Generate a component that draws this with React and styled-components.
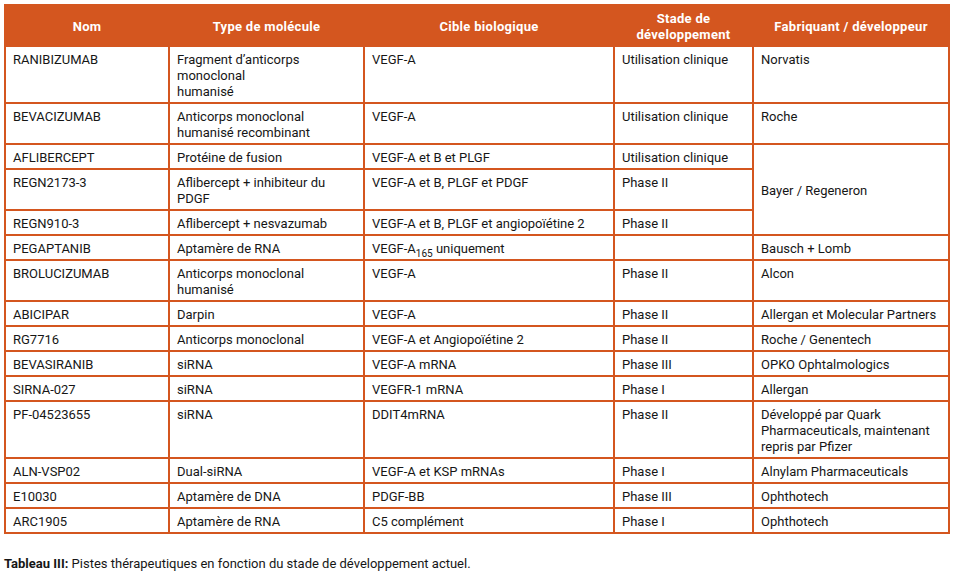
import styled, { createGlobalStyle } from "styled-components";

const ORANGE = "#d4561f";

const GlobalStyle = createGlobalStyle`
  body {
    margin: 0;
    background: #fff;
    font-family: "Roboto", "Liberation Sans", Arial, sans-serif;
    color: #161616;
  }
`;

const Page = styled.div`
  padding: 4px 5px 0 4px;
`;

const Table = styled.table`
  width: 944px;
  border-collapse: collapse;
  table-layout: fixed;
  font-size: 13px;
  line-height: 16px;
`;

const Th = styled.th`
  background: ${ORANGE};
  color: #fff;
  font-weight: 700;
  letter-spacing: 0.3px;
  text-align: center;
  padding: 5px 6px 2px;
  border: 2px solid ${ORANGE};
  vertical-align: middle;
`;

const Td = styled.td`
  border: 2px solid ${ORANGE};
  padding: 5px 7px 2px;
  vertical-align: ${(p) => (p.$middle ? "middle" : "top")};
`;

const Sub = styled.sub`
  font-size: 10px;
  line-height: 0;
  vertical-align: -4px;
`;

const Caption = styled.p`
  margin: 22px 0 0;
  font-size: 13px;
  line-height: 16px;
  b {
    font-weight: 700;
  }
`;

const rows = [
  ["RANIBIZUMAB", <>Fragment d’anticorps<br />monoclonal<br />humanisé</>, "VEGF-A", "Utilisation clinique", "Norvatis"],
  ["BEVACIZUMAB", <>Anticorps monoclonal<br />humanisé recombinant</>, "VEGF-A", "Utilisation clinique", "Roche"],
  ["AFLIBERCEPT", "Protéine de fusion", "VEGF-A et B et PLGF", "Utilisation clinique", { text: "Bayer / Regeneron", span: 3 }],
  ["REGN2173-3", <>Aflibercept + inhibiteur du<br />PDGF</>, "VEGF-A et B, PLGF et PDGF", "Phase II", null],
  ["REGN910-3", "Aflibercept + nesvazumab", "VEGF-A et B, PLGF et angiopoïétine 2", "Phase II", null],
  ["PEGAPTANIB", "Aptamère de RNA", <>VEGF-A<Sub>165</Sub> uniquement</>, "", "Bausch + Lomb"],
  ["BROLUCIZUMAB", <>Anticorps monoclonal<br />humanisé</>, "VEGF-A", "Phase II", "Alcon"],
  ["ABICIPAR", "Darpin", "VEGF-A", "Phase II", "Allergan et Molecular Partners"],
  ["RG7716", "Anticorps monoclonal", "VEGF-A et Angiopoïétine 2", "Phase II", "Roche / Genentech"],
  ["BEVASIRANIB", "siRNA", "VEGF-A mRNA", "Phase III", "OPKO Ophtalmologics"],
  ["SIRNA-027", "siRNA", "VEGFR-1 mRNA", "Phase I", "Allergan"],
  ["PF-04523655", "siRNA", "DDIT4mRNA", "Phase II", <>Développé par Quark<br />Pharmaceuticals, maintenant<br />repris par Pfizer</>],
  ["ALN-VSP02", "Dual-siRNA", "VEGF-A et KSP mRNAs", "Phase I", "Alnylam Pharmaceuticals"],
  ["E10030", "Aptamère de DNA", "PDGF-BB", "Phase III", "Ophthotech"],
  ["ARC1905", "Aptamère de RNA", "C5 complément", "Phase I", "Ophthotech"],
];

function Row({ cells }) {
  return (
    <tr>
      {cells.map((c, i) => {
        if (c === null) return null;
        if (c && typeof c === "object" && c.span) {
          return (
            <Td key={i} rowSpan={c.span} $middle>
              {c.text}
            </Td>
          );
        }
        return <Td key={i}>{c}</Td>;
      })}
    </tr>
  );
}

export default function App() {
  return (
    <Page>
      <GlobalStyle />
      <Table>
        <colgroup>
          <col style={{ width: 164 }} />
          <col style={{ width: 195 }} />
          <col style={{ width: 250 }} />
          <col style={{ width: 139 }} />
          <col style={{ width: 196 }} />
        </colgroup>
        <thead>
          <tr>
            <Th>Nom</Th>
            <Th>Type de molécule</Th>
            <Th>Cible biologique</Th>
            <Th>Stade de<br />développement</Th>
            <Th>Fabriquant / développeur</Th>
          </tr>
        </thead>
        <tbody>
          {rows.map((r, i) => (
            <Row key={i} cells={r} />
          ))}
        </tbody>
      </Table>
      <Caption>
        <b>Tableau III:</b> Pistes thérapeutiques en fonction du stade de développement actuel.
      </Caption>
    </Page>
  );
}
